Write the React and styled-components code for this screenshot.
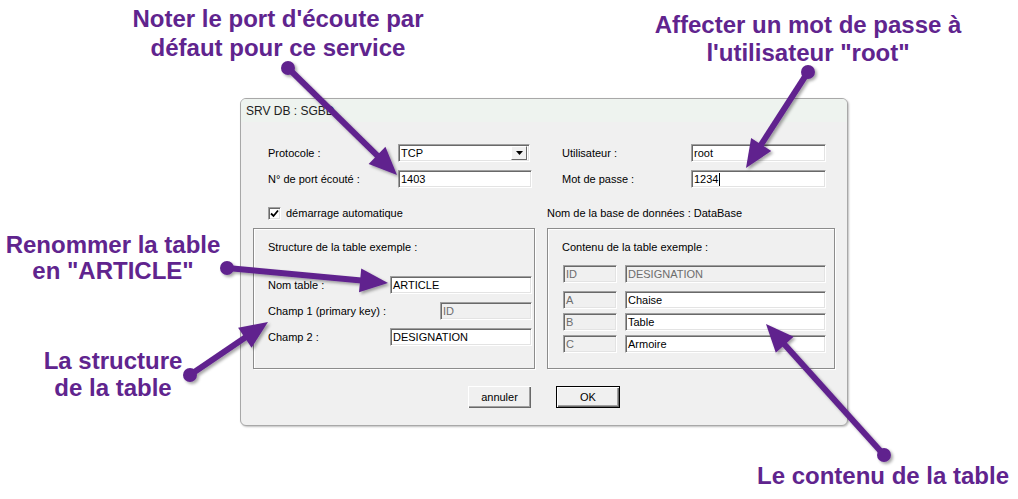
import React from "react";
import styled, { createGlobalStyle } from "styled-components";

const GlobalStyle = createGlobalStyle`
  body {
    margin: 0;
    background: #ffffff;
    font-family: "Liberation Sans", Arial, sans-serif;
  }
`;

const PURPLE = "#60248e";

const arrows = [
  { from: [288, 68], to: [397, 175] },
  { from: [808, 72], to: [746, 168] },
  { from: [227, 268], to: [388, 283] },
  { from: [190, 375], to: [268, 322] },
  { from: [884, 455], to: [766, 324] },
];

const notes = [
  { x: 118, y: 4, w: 320, lh: 29, lines: ["Noter le port d'écoute par", "défaut pour ce service"] },
  { x: 638, y: 11, w: 340, lh: 28, lines: ["Affecter un mot de passe à", "l'utilisateur \"root\""] },
  { x: 0, y: 232, w: 226, lh: 26, lines: ["Renommer la table", "en \"ARTICLE\""] },
  { x: 0, y: 347, w: 226, lh: 27, lines: ["La structure", "de la table"] },
  { x: 740, y: 462, w: 286, lh: 28, lines: ["Le contenu de la table"] },
];

const rows = [
  ["A", "Chaise"],
  ["B", "Table"],
  ["C", "Armoire"],
];

const Arrow = ({ from, to }) => {
  const [x1, y1] = from;
  const [x2, y2] = to;
  const len = Math.hypot(x2 - x1, y2 - y1);
  const ux = (x2 - x1) / len;
  const uy = (y2 - y1) / len;
  const head = 28;
  const half = 12;
  const bx = x2 - ux * head;
  const by = y2 - uy * head;
  const pts = [
    [x2, y2],
    [bx - uy * half, by + ux * half],
    [bx + uy * half, by - ux * half],
  ]
    .map((p) => p.join(","))
    .join(" ");
  return (
    <g filter="url(#shadow)">
      <line
        x1={x1}
        y1={y1}
        x2={bx + ux * 4}
        y2={by + uy * 4}
        stroke={PURPLE}
        strokeWidth="6"
      />
      <polygon points={pts} fill={PURPLE} />
      <circle cx={x1} cy={y1} r="7" fill={PURPLE} />
    </g>
  );
};

const App = () => {
  return (
    <>
      <GlobalStyle />
      <Stage>
        <Dialog>
          <TitleBar>SRV DB : SGBD</TitleBar>
          <Body>
            <TopRow>
              <FieldGrid $label={130} $input={134}>
                <Label>Protocole :</Label>
                <Combo>
                  <span>TCP</span>
                  <ComboButton>
                    <svg width="7" height="4" viewBox="0 0 7 4">
                      <polygon points="0,0 7,0 3.5,4" fill="#000" />
                    </svg>
                  </ComboButton>
                </Combo>
                <Label>N° de port écouté :</Label>
                <Field>1403</Field>
              </FieldGrid>
              <FieldGrid $label={129} $input={135}>
                <Label>Utilisateur :</Label>
                <Field>root</Field>
                <Label>Mot de passe :</Label>
                <Field>
                  1234
                  <Caret />
                </Field>
              </FieldGrid>
            </TopRow>

            <SplitRow>
              <CheckLine>
                <CheckBox>
                  <svg width="9" height="9" viewBox="0 0 9 9">
                    <path d="M1 4.5 L3.5 7 L8 1.5" stroke="#000" strokeWidth="1.8" fill="none" />
                  </svg>
                </CheckBox>
                <Label>démarrage automatique</Label>
              </CheckLine>
              <Label>Nom de la base de données : DataBase</Label>
            </SplitRow>

            <SplitRow $top={8}>
              <GroupBox>
                <GroupTitle>Structure de la table exemple :</GroupTitle>
                <StructRows>
                  <StructRow>
                    <Label>Nom table :</Label>
                    <Field $w={142}>ARTICLE</Field>
                  </StructRow>
                  <StructRow>
                    <Label>Champ 1 (primary key) :</Label>
                    <Field $w={92} $disabled>ID</Field>
                  </StructRow>
                  <StructRow>
                    <Label>Champ 2 :</Label>
                    <Field $w={142}>DESIGNATION</Field>
                  </StructRow>
                </StructRows>
              </GroupBox>

              <GroupBox>
                <GroupTitle>Contenu de la table exemple :</GroupTitle>
                <DataGrid>
                  <Field $disabled>ID</Field>
                  <Field $disabled>DESIGNATION</Field>
                  {rows.map(([id, name]) => (
                    <React.Fragment key={id}>
                      <Field $disabled>{id}</Field>
                      <Field>{name}</Field>
                    </React.Fragment>
                  ))}
                </DataGrid>
              </GroupBox>
            </SplitRow>

            <Buttons>
              <Button $w={63}>annuler</Button>
              <Button $w={64} $default>
                OK
              </Button>
            </Buttons>
          </Body>
        </Dialog>

        <Overlay width="1018" height="499" viewBox="0 0 1018 499">
          <defs>
            <filter id="shadow" x="-20%" y="-20%" width="140%" height="140%">
              <feDropShadow dx="2" dy="2" stdDeviation="1.5" floodColor="#000" floodOpacity="0.35" />
            </filter>
          </defs>
          {arrows.map((a, i) => (
            <Arrow key={i} {...a} />
          ))}
        </Overlay>

        {notes.map((n, i) => (
          <Note key={i} $x={n.x} $y={n.y} $w={n.w} $lh={n.lh}>
            {n.lines.map((l) => (
              <div key={l}>{l}</div>
            ))}
          </Note>
        ))}
      </Stage>
    </>
  );
};

export default App;

const Stage = styled.div`
  position: relative;
  width: 1018px;
  height: 499px;
  overflow: hidden;
  box-sizing: border-box;
  padding: 98px 0 0 240px;
`;

const Dialog = styled.div`
  width: 608px;
  height: 328px;
  box-sizing: border-box;
  border: 1px solid #a8a8a8;
  border-radius: 6px;
  background: #f0f0f0;
  box-shadow: 1px 1px 2px rgba(0, 0, 0, 0.25);
  overflow: hidden;
  font-size: 11px;
  color: #000;
`;

const TitleBar = styled.div`
  height: 23px;
  display: flex;
  align-items: center;
  padding-left: 5px;
  background: #eef3ef;
  font-size: 12px;
  color: #222;
`;

const Body = styled.div`
  padding-top: 22px;
`;

const TopRow = styled.div`
  display: flex;
  gap: 30px;
  padding-left: 27px;
`;

const FieldGrid = styled.div`
  display: grid;
  grid-template-columns: ${(p) => p.$label}px ${(p) => p.$input}px;
  grid-auto-rows: 18px;
  row-gap: 8px;
  align-items: center;
`;

const Label = styled.span`
  white-space: nowrap;
  line-height: 14px;
`;

const Field = styled.div`
  box-sizing: border-box;
  height: 18px;
  width: ${(p) => (p.$w ? `${p.$w}px` : "auto")};
  display: flex;
  align-items: center;
  padding-left: 2px;
  background: ${(p) => (p.$disabled ? "#f0f0f0" : "#ffffff")};
  color: ${(p) => (p.$disabled ? "#6d6d6d" : "#000")};
  border-top: 1px solid #a0a0a0;
  border-left: 1px solid #a0a0a0;
  border-right: 1px solid #ffffff;
  border-bottom: 1px solid #ffffff;
  box-shadow: inset 1px 1px 0 #696969, inset -1px -1px 0 #e3e3e3;
  white-space: nowrap;
`;

const Caret = styled.span`
  display: inline-block;
  width: 1px;
  height: 13px;
  background: #000;
  margin-left: 1px;
`;

const Combo = styled(Field)`
  width: 132px;
  padding-right: 2px;
  justify-content: space-between;
`;

const ComboButton = styled.div`
  width: 16px;
  height: 14px;
  box-sizing: border-box;
  display: flex;
  align-items: center;
  justify-content: center;
  background: #f0f0f0;
  border-top: 1px solid #ffffff;
  border-left: 1px solid #ffffff;
  border-right: 1px solid #696969;
  border-bottom: 1px solid #696969;
`;

const SplitRow = styled.div`
  display: grid;
  grid-template-columns: 282px 288px;
  column-gap: 12px;
  padding-left: 12px;
  margin-top: ${(p) => p.$top ?? 18}px;
  align-items: center;
`;

const CheckLine = styled.div`
  display: flex;
  align-items: center;
  gap: 5px;
  padding-left: 15px;
  height: 14px;
`;

const CheckBox = styled.div`
  box-sizing: border-box;
  width: 13px;
  height: 13px;
  display: flex;
  align-items: center;
  justify-content: center;
  background: #fff;
  border-top: 1px solid #a0a0a0;
  border-left: 1px solid #a0a0a0;
  border-right: 1px solid #fff;
  border-bottom: 1px solid #fff;
  box-shadow: inset 1px 1px 0 #696969, inset -1px -1px 0 #e3e3e3;
`;

const GroupBox = styled.div`
  box-sizing: border-box;
  height: 141px;
  border: 1px solid #8c8c8c;
  box-shadow: inset 1px 1px 0 #ffffff, 1px 1px 0 #ffffff;
  padding: 11px 8px 0 14px;
`;

const GroupTitle = styled.div`
  line-height: 14px;
`;

const StructRows = styled.div`
  display: flex;
  flex-direction: column;
  gap: 8px;
  margin-top: 22px;
  margin-right: -6px;
`;

const StructRow = styled.div`
  display: flex;
  justify-content: space-between;
  align-items: center;
`;

const DataGrid = styled.div`
  display: grid;
  grid-template-columns: 54px 201px;
  grid-template-rows: 22px repeat(3, 18px);
  align-items: start;
  column-gap: 8px;
  row-gap: 4px;
  margin-top: 11px;
  margin-left: 1px;
`;

const Buttons = styled.div`
  display: flex;
  justify-content: center;
  gap: 25px;
  margin-top: 17px;
`;

const Button = styled.button`
  box-sizing: border-box;
  width: ${(p) => p.$w}px;
  height: 22px;
  padding: 0;
  font-family: "Liberation Sans", Arial, sans-serif;
  font-size: 11px;
  color: #000;
  background: #f0f0f0;
  border: ${(p) => (p.$default ? "1px solid #000" : "none")};
  box-shadow: inset 1px 1px 0 #fff, inset -1px -1px 0 #696969,
    inset -2px -2px 0 #a0a0a0;
`;

const Overlay = styled.svg`
  position: absolute;
  left: 0;
  top: 0;
  pointer-events: none;
`;

const Note = styled.div`
  position: absolute;
  left: ${(p) => p.$x}px;
  top: ${(p) => p.$y}px;
  width: ${(p) => p.$w}px;
  text-align: center;
  font-family: "Liberation Sans", Arial, sans-serif;
  font-weight: bold;
  font-size: 24px;
  line-height: ${(p) => p.$lh}px;
  color: ${PURPLE};
  white-space: nowrap;
`;
